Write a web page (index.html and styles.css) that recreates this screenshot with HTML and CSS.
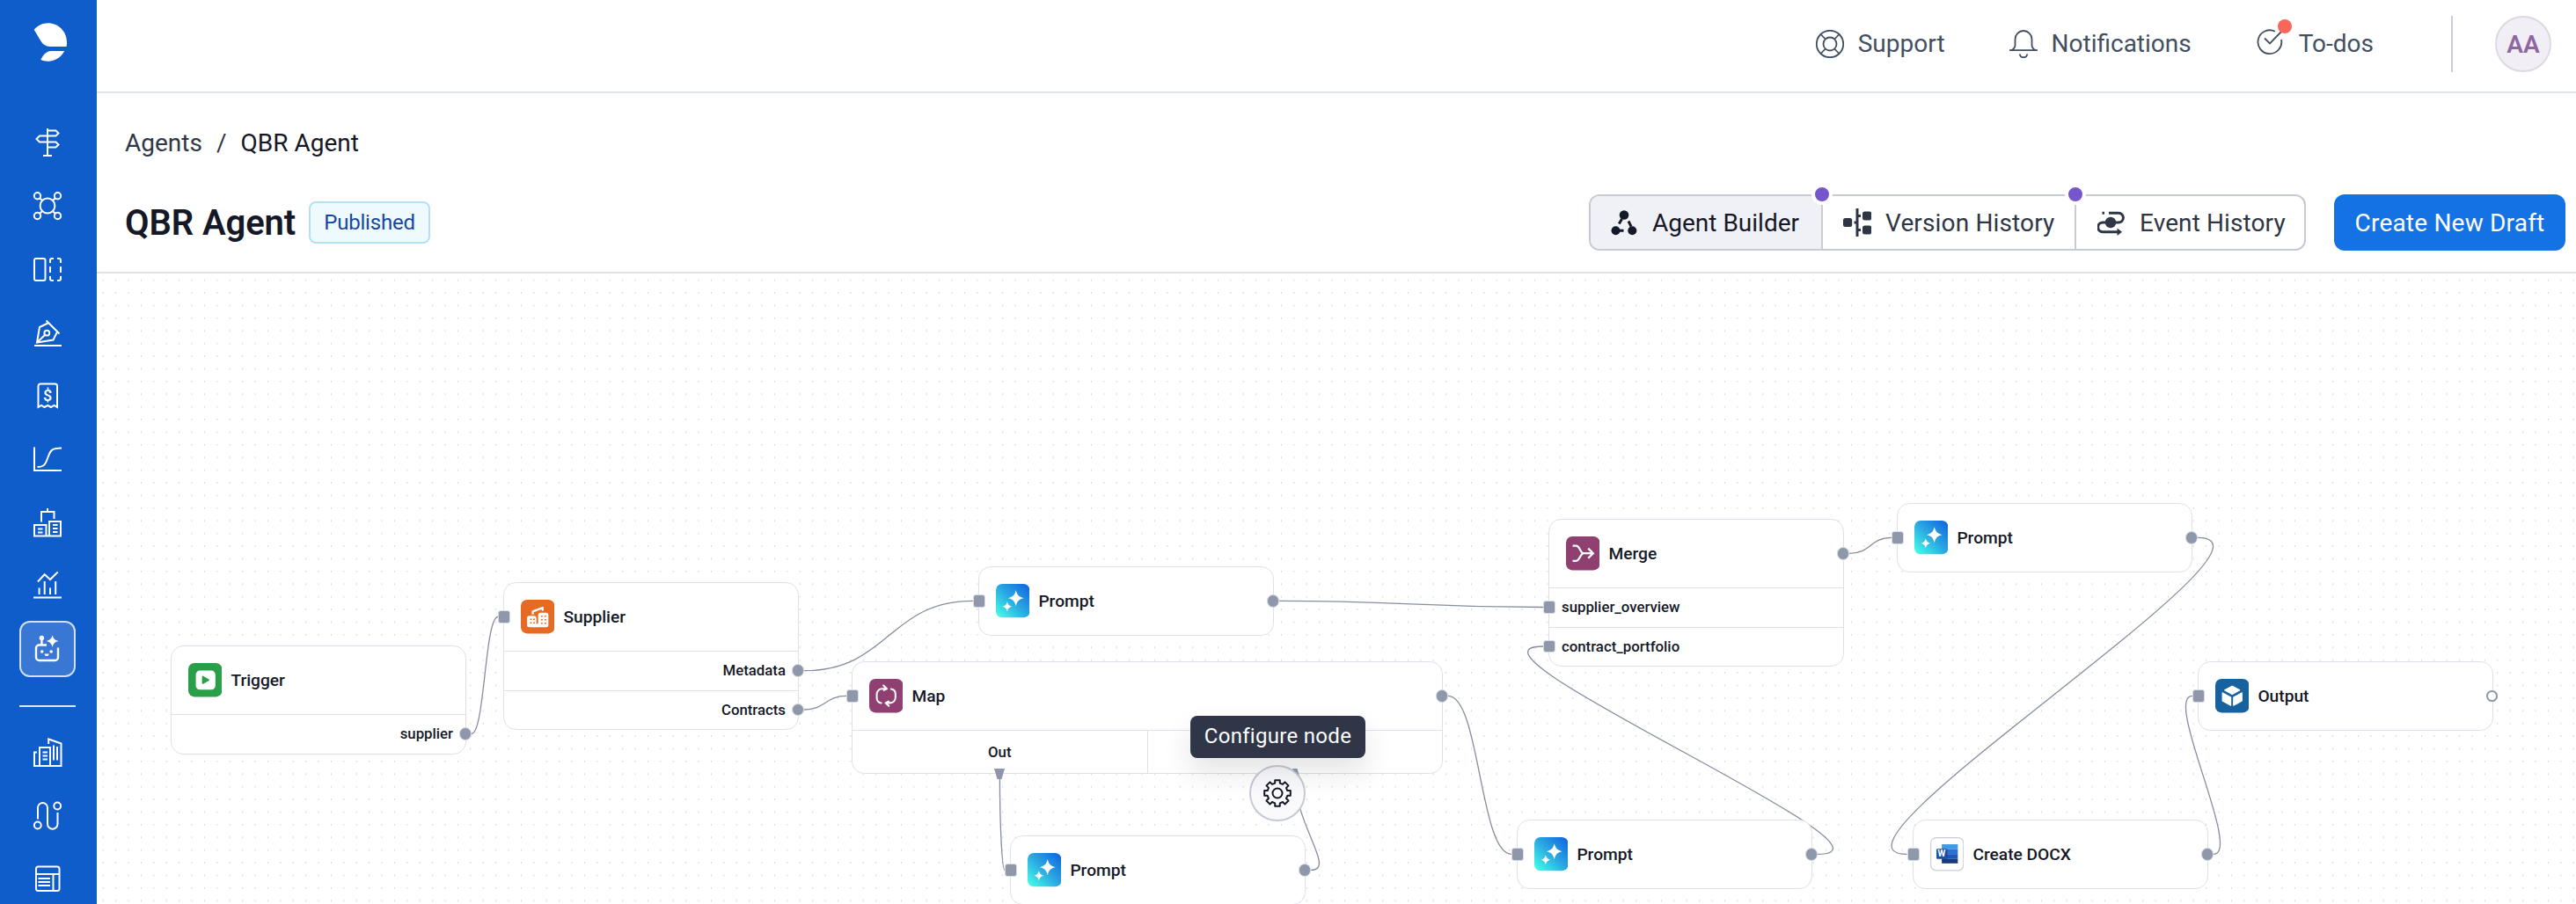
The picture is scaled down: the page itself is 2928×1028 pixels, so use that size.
FILE: index.html
```html
<!DOCTYPE html>
<html lang="en">
<head>
    <meta charset="UTF-8">
    <title>QBR Agent</title>
    <meta name="viewport" content="width=device-width, initial-scale=1.0">
    <link rel="stylesheet" href="styles.css">
</head>
<body>
    <!-- Shared icons -->
    <svg class="defs" width="0" height="0">
        <defs>
            <linearGradient id="promptFill" x1="0" y1="1" x2="1" y2="0">
                <stop offset="0.05" stop-color="#45fbe6"/>
                <stop offset="0.5" stop-color="#2aa9e2"/>
                <stop offset="0.95" stop-color="#1268e0"/>
            </linearGradient>
            <symbol id="sparkles" viewBox="0 0 38 38">
                <rect width="38" height="38" rx="7" fill="url(#promptFill)"/>
                <path fill="#fff" d="M22.5 7c1.3 5.5 3 7.600 8.700 9-5.700 1.400-7.400 3.500-8.700 9-1.300-5.500-3-7.600-8.700-9 5.700-1.400 7.400-3.500 8.700-9z"/>
                <path fill="#fff" d="M12.700 19.800c.8 3.500 2 4.800 5.700 5.700-3.700.9-4.900 2.200-5.700 5.700-.8-3.500-2-4.800-5.700-5.700 3.700-.9 4.900-2.200 5.700-5.700z"/>
            </symbol>
        </defs>
    </svg>

    <div class="app">
        <nav class="sidebar">
            <div class="logo">
                <svg width="38" height="44" viewBox="38 26 38 44" fill="#fff">
                    <path d="M38.700 33.700C43 29 48.500 26.300 54.500 26.300 66.500 26.300 76 36 76 48c0 2-.1 3.500-.4 4.900H57C52 52.800 48.500 50.500 46 46z"/>
                    <path d="M73.300 58H58c-6 .5-9 4.500-11.700 10C56 72 67 69 73.300 58z"/>
                </svg>
            </div>
            <a class="nav-item"><svg viewBox="0 0 32 32"><path d="M16 0v31M11 31h10M16 2.500h9.500l3 3-3 3H7L3.500 12 7 15.500h18.500l3 3-3 3H16"/></svg></a>
            <a class="nav-item"><svg viewBox="0 0 32 32"><circle cx="16" cy="16" r="8.400"/><circle cx="4.500" cy="4.700" r="3.700"/><circle cx="27.500" cy="4.700" r="3.700"/><circle cx="4.500" cy="27.500" r="3.700"/><circle cx="27.500" cy="27.500" r="3.700"/><path d="M7.200 7.400l3 2.700M24.800 7.400l-3 2.700M7.200 24.800l3-2.700M24.800 24.800l-3-2.700"/></svg></a>
            <a class="nav-item"><svg viewBox="0 0 32 32"><rect x="1" y="4" width="12.500" height="25" rx="2"/><path d="M19 9V6a2 2 0 0 1 2-2h2M27 4h2a2 2 0 0 1 2 2v3M19 13v7M31 13v7M19 24v3a2 2 0 0 0 2 2h2M27 29h2a2 2 0 0 0 2-2v-3"/></svg></a>
            <a class="nav-item"><svg viewBox="0 0 32 32"><path d="M1 31h31M14.500 2.500L29.500 17.500M16.500 5.500L7 10 4 27.500l18.500-3L27 15.500M4 27.500l9.200-8.800"/><circle cx="15.300" cy="16.700" r="2.900"/></svg></a>
            <a class="nav-item"><svg viewBox="0 0 32 32"><path d="M5.500 29V5a2.500 2.500 0 0 1 2.500-2.500h16.500A2.500 2.500 0 0 1 27 5v24l-3.500-2-3.500 2-3.700-2-3.800 2L9 27z"/><text x="16.200" y="22" class="dollar">$</text></svg></a>
            <a class="nav-item"><svg viewBox="0 0 32 32"><path d="M1 2.500V29h31M4.500 25c7 0 9-2 12-11S22 3.500 32 3.500"/></svg></a>
            <a class="nav-item"><svg viewBox="0 0 32 32"><path d="M16 0v4M9 15.500V4h14.500v8M1 19h13.500v12.500H1zM18 15h13v16.500H18zM14.500 31.500H18M5 23.500h5.500M5 27.500h5.500M22 19h5.500M22 23h5.500M22 27h5.500"/></svg></a>
            <a class="nav-item"><svg viewBox="0 0 32 32"><path d="M0 29.500h32M6.600 18.400V26M12.700 11v15M19 18.400V26M25.200 11v15M5 11.500l7.700-8.300L19 9l8.700-8.500"/></svg></a>
            <a class="nav-item active"><svg viewBox="0 0 32 32"><path class="line" d="M15 11.500H6.500A3.500 3.500 0 0 0 3 15v10.500A3.500 3.500 0 0 0 6.500 29h18a3.500 3.500 0 0 0 3.500-3.500V14.500M9.400 5v6"/><circle cx="9.400" cy="3.500" r="2.700" class="solid"/><circle cx="9.700" cy="19" r="1.800" class="solid"/><circle cx="20.200" cy="19" r="1.800" class="solid"/><path class="solid" d="M12.500 21.500h5.200c0 3.400-5.200 3.400-5.200 0z"/><path class="solid" d="M21.600.3c1.300 4.200 2.700 5.600 6.800 6.800-4.100 1.200-5.500 2.600-6.800 6.800-1.300-4.200-2.700-5.600-6.800-6.800 4.100-1.200 5.500-2.600 6.800-6.800z"/></svg></a>
            <div class="nav-divider"></div>
            <a class="nav-item"><svg viewBox="0 0 32 32"><path d="M4 15.500H1v15.500h30.500V5.500L17.200.5V6M7 31V10h12v21M23 7.500v17M27 9v15.500M10.500 15.500h5.500M10.500 19.500h5.500M10.500 23.500h5.500"/></svg></a>
            <a class="nav-item"><svg viewBox="0 0 32 32"><circle cx="4.800" cy="26.500" r="3.900"/><circle cx="27.200" cy="4.500" r="3.900"/><path d="M5 19.500V6.500a5.500 5.500 0 0 1 11 0v18.500a5.700 5.700 0 0 0 11.500 0V12"/></svg></a>
            <a class="nav-item"><svg viewBox="0 0 32 32"><rect x="3" y="1.500" width="26.500" height="27.500" rx="2.500"/><path d="M3 10h26.500M22.500 10v19M5.500 15h13.500M5.500 19h13.500M5.500 23h13.500"/></svg></a>
        </nav>

        <main class="main">
            <header class="topbar">
                <a class="top-link support">
                    <svg viewBox="0 0 32 32"><circle cx="16" cy="16" r="15.200"/><circle cx="16" cy="16" r="7.500"/><path d="M5.500 5l5.300 5.500M26.500 5l-5.300 5.500M5.500 27l5.300-5.500M26.500 27l-5.300-5.500"/></svg>
                    Support
                </a>
                <a class="top-link notifications">
                    <svg viewBox="0 0 32 32"><path d="M0 23.200h32M2.500 23c3-1.500 4-3 4-6v-6.500a9.500 9.500 0 0 1 19 0V17c0 3 1 4.500 4 6M11.800 27.500c.5 5 7.900 5 8.400 0"/></svg>
                    Notifications
                </a>
                <a class="top-link todos">
                    <svg viewBox="0 0 32 32"><path d="M21 3.800A13.400 13.400 0 1 0 28 13M9 11.500l6 6L29 3"/></svg>
                    <span class="alert-dot"></span>
                    To-dos
                </a>
                <div class="top-divider"></div>
                <div class="avatar">AA</div>
            </header>

            <section class="page-header">
                <div class="breadcrumb">
                    <span>Agents</span>
                    <span class="slash">/</span>
                    <span class="current">QBR Agent</span>
                </div>
                <div class="title-row">
                    <h1>QBR Agent</h1>
                    <span class="badge">Published</span>
                    <div class="tabs">
                        <button class="tab tab-builder active">
                            <svg viewBox="0 0 32 32"><circle cx="16" cy="7.500" r="5.300"/><circle cx="6.500" cy="25.200" r="5"/><circle cx="25.300" cy="25.200" r="5"/><path class="line" d="M13.500 12l-3.200 5.500M21 14.500l3 6M11 25.200h4.500"/></svg>
                            Agent Builder
                        </button>
                        <button class="tab tab-version">
                            <svg viewBox="0 0 32 32"><rect x="0" y="11" width="10.200" height="10" rx="2.500"/><rect x="22" y="3.500" width="10.200" height="10" rx="2.500"/><rect x="22" y="19.500" width="10.200" height="10" rx="2.500"/><path class="line" d="M16 0v32M12.500 16H16M16 8.500h4M16 24.500h4"/></svg>
                            Version History
                            <span class="new-dot"></span>
                        </button>
                        <button class="tab tab-event">
                            <svg viewBox="0 0 32 32"><circle cx="15" cy="16" r="6.200"/><path class="line" d="M5.500 5.200h2.500M13 5.200h11a5.400 5.400 0 0 1 0 10.800h-3M9 16H6a5.300 5.300 0 0 0 0 10.700h18"/><path d="M22.500 22.500l5.500 4.200-5.500 4.200z"/></svg>
                            Event History
                            <span class="new-dot"></span>
                        </button>
                    </div>
                    <button class="primary">Create New Draft</button>
                </div>
            </section>

            <!-- Flow canvas -->
            <section class="canvas">
                <svg class="edges" width="2818" height="717" viewBox="110 311 2818 717">
                    <pattern id="dots" x="110" y="311" width="14.4" height="14.4" patternUnits="userSpaceOnUse">
                        <circle cx="7.200" cy="7.600" r="0.650" fill="#b4b6bb"/>
                    </pattern>
                    <rect x="110" y="311" width="2818" height="717" fill="url(#dots)"/>
                    <path d="M536 834.500C551 834.500 551 701.500 566 701.500"/>
                    <path d="M914 762.700C1010 762.700 1010 683.400 1106 683.400"/>
                    <path d="M914 807C938 807 938 791.400 962 791.400"/>
                    <path d="M1454 683.400C1604 683.400 1604 690.500 1754 690.500"/>
                    <path d="M2102 629.400C2126 629.400 2126 611.400 2150 611.400"/>
                    <path d="M2498 611.400C2622 611.400 2043.600 971.400 2167.600 971.400"/>
                    <path d="M2516 971.400C2549.500 971.400 2458.500 791.400 2492 791.400"/>
                    <path d="M1646 791.400C1682 791.400 1682 971.400 1718 971.400"/>
                    <path d="M2066 971.400C2187 971.400 1633 735 1754 735"/>
                    <path d="M1136.400 884C1136.400 938 1139 989.400 1142 989.400"/>
                    <path d="M1490 989.400C1519 989.400 1472 938 1472 884"/>
                </svg>

                <div class="node trigger">
                    <div class="node-head">
                        <svg viewBox="0 0 38 38"><rect width="38" height="38" rx="7" fill="#2b9e49"/><rect x="8.500" y="8.500" width="22" height="21.500" rx="4.500" fill="#fff"/><path d="M15.500 15.300c0-.8.800-1 1.300-.7l6.400 3.700c.7.400.7 1.200 0 1.600l-6.400 3.600c-.6.300-1.300 0-1.300-.7z" fill="#2b9e49"/></svg>
                        Trigger
                    </div>
                    <div class="node-row out">supplier<i class="port port-out"></i></div>
                </div>

                <div class="node supplier">
                    <div class="node-head">
                        <i class="port port-in"></i>
                        <svg viewBox="0 0 38 38"><rect width="38" height="38" rx="7" fill="#e76a22"/><path d="M13.500 15.500v-2.300l11-4.200v2.500" fill="none" stroke="#fff" stroke-width="2.400" stroke-linecap="round" stroke-linejoin="round"/><rect x="7" y="18" width="10.500" height="13" rx="2.500" fill="#fff"/><rect x="19.500" y="14.500" width="11.500" height="16.500" rx="2.500" fill="#fff"/><path d="M15 27h6v4h-6z" fill="#fff"/><path d="M10.500 22h1.800M14 22h1.800M10.500 26h1.800M14 26h1.800M22.700 18.500h1.800M26.700 18.500h1.800M22.700 22.500h1.800M26.700 22.500h1.800M22.700 26.500h1.800M26.700 26.500h1.800" stroke="#e76a22" stroke-width="1.600"/></svg>
                        Supplier
                    </div>
                    <div class="node-row out">Metadata<i class="port port-out"></i></div>
                    <div class="node-row out">Contracts<i class="port port-out"></i></div>
                </div>

                <div class="node prompt-overview">
                    <div class="node-head"><i class="port port-in"></i><svg><use href="#sparkles"/></svg>Prompt<i class="port port-out"></i></div>
                </div>

                <div class="node map">
                    <div class="node-head">
                        <i class="port port-in"></i>
                        <svg viewBox="0 0 38 38"><rect width="38" height="38" rx="7" fill="#903f71"/><path d="M19.500 11.200h-5a6 6 0 0 0-6 6v4c0 3.200 2 5.400 5 5.900M16 7.500l3.800 3.700-3.300 1.500M18.500 27.100h5a6 6 0 0 0 6-6v-4c0-3.200-2-5.300-5-5.800M22 30.500l-3.600-3.400 3.300-1.800" fill="none" stroke="#fff" stroke-width="2" stroke-linecap="round" stroke-linejoin="round"/></svg>
                        Map
                        <i class="port port-out"></i>
                    </div>
                    <div class="node-split">
                        <div>Out<svg class="port-tri" viewBox="0 0 14 14"><path d="M1 1h12L9.500 13h-5z"/></svg></div>
                        <div><svg class="port-tri" viewBox="0 0 14 14"><path d="M4.500 1h5L13 13H1z"/></svg></div>
                    </div>
                </div>

                <div class="node prompt-inner">
                    <div class="node-head"><i class="port port-in"></i><svg><use href="#sparkles"/></svg>Prompt<i class="port port-out"></i></div>
                </div>

                <div class="node merge">
                    <div class="node-head">
                        <svg viewBox="0 0 38 38"><rect width="38" height="38" rx="7" fill="#903f71"/><path d="M7.500 10.500h4c4 0 4.500 8.500 8.500 8.500M7.500 27.500h4c4 0 4.500-8.500 8.500-8.500h10.500M25 13.500l5.500 5.500-5.500 5.500" fill="none" stroke="#fff" stroke-width="2.200"/></svg>
                        Merge
                        <i class="port port-out"></i>
                    </div>
                    <div class="node-row in"><i class="port port-in"></i>supplier_overview</div>
                    <div class="node-row in"><i class="port port-in"></i>contract_portfolio</div>
                </div>

                <div class="node prompt-report">
                    <div class="node-head"><i class="port port-in"></i><svg><use href="#sparkles"/></svg>Prompt<i class="port port-out"></i></div>
                </div>

                <div class="node prompt-contracts">
                    <div class="node-head"><i class="port port-in"></i><svg><use href="#sparkles"/></svg>Prompt<i class="port port-out"></i></div>
                </div>

                <div class="node docx">
                    <div class="node-head">
                        <i class="port port-in"></i>
                        <svg viewBox="0 0 38 38"><rect x=".6" y=".6" width="36.800" height="36.800" rx="6" fill="#fff" stroke="#c9ced8" stroke-width="1.200"/><rect x="13" y="8" width="18" height="5.500" fill="#3f9ae4"/><rect x="13" y="13.500" width="18" height="5.500" fill="#2a72cf"/><rect x="13" y="19" width="18" height="5.500" fill="#1d57b8"/><rect x="13" y="24.500" width="18" height="5" fill="#16397f"/><path d="M13 13.500h6.500v12.500H13z" fill="#153a86" opacity=".6"/><rect x="7" y="13" width="11.500" height="11.500" rx="1" fill="#1b4fae"/><text x="12.700" y="22" class="word">W</text></svg>
                        Create DOCX
                        <i class="port port-out"></i>
                    </div>
                </div>

                <div class="node output">
                    <div class="node-head">
                        <i class="port port-in"></i>
                        <svg viewBox="0 0 38 38"><rect width="38" height="38" rx="7" fill="#17629e"/><g fill="#fff" stroke="#fff" stroke-linejoin="round"><path d="M19 8l8.500 4.600L19 17.500l-8.500-4.900zM8 15.500l9.500 5.200v9.300L8 24.700zM30 15.500l-9.500 5.200v9.300l9.500-5.300z"/></g></svg>
                        Output
                        <i class="port port-out empty"></i>
                    </div>
                </div>

                <button class="configure">
                    <svg viewBox="0 0 32 32"><path d="M13.200 4.600V1.200h5.600v3.400l3.200 1.300 2.500-2.500 4 4-2.500 2.500 1.300 3.200h3.500v5.700h-3.500L26 22l2.500 2.500-4 4-2.500-2.500-3.200 1.400v3.400h-5.600v-3.400L10 26l-2.500 2.500-4-4L6 22l-1.300-3.200H1.200v-5.700h3.500L6 9.900 3.500 7.400l4-4L10 5.900z"/><circle cx="16" cy="16" r="5.500"/></svg>
                </button>
                <div class="tooltip">Configure node</div>
            </section>
        </main>
    </div>
</body>
</html>
```
FILE: styles.css
```css
* {
    box-sizing: border-box;
}

body {
    margin: 0;
    font-family: Roboto, "Liberation Sans", sans-serif;
    font-size: 28px;
    color: #151826;
    background-color: #fff;
}

button {
    font: inherit;
    color: inherit;
    padding: 0;
    border: none;
    background: none;
}

.defs {
    position: absolute;
}

.app {
    display: flex;
    height: 1028px;
    overflow: hidden;
}

/* Sidebar */
.sidebar {
    width: 110px;
    flex: none;
    display: flex;
    flex-direction: column;
    gap: 8px;
    padding-left: 22px;
    background-color: #0f5ccb;
}

.logo {
    flex: none;
    height: 122px;
    padding: 26px 0 0 16px;
}

.logo svg {
    display: block;
}

.nav-item {
    width: 64px;
    height: 64px;
    flex: none;
    display: flex;
    align-items: center;
    justify-content: center;
    border: 2px solid transparent;
    border-radius: 12px;
}

.nav-item.active {
    background-color: #3877d4;
    border-color: #d3e0f4;
}

.nav-item svg {
    width: 32px;
    height: 32px;
    overflow: visible;
    fill: none;
    stroke: #fff;
    stroke-width: 2;
}

.nav-item .line {
    stroke-width: 2.4;
}

.nav-item .solid {
    fill: #fff;
    stroke: none;
}

.nav-item .dollar {
    font-size: 18px;
    font-weight: 500;
    text-anchor: middle;
    fill: #fff;
    stroke: none;
}

.nav-divider {
    flex: none;
    width: 64px;
    height: 2px;
    margin: 24px 0 12px;
    background-color: #dbe6f7;
}

/* Top bar */
.main {
    flex: 1;
    min-width: 0;
    display: flex;
    flex-direction: column;
}

.topbar {
    height: 106px;
    flex: none;
    display: flex;
    align-items: center;
    justify-content: flex-end;
    padding: 0 28px 4px 0;
    border-bottom: 2px solid #dfe4e9;
    color: #434f60;
}

.top-link {
    position: relative;
    display: flex;
    align-items: center;
    gap: 16px;
    line-height: 32px;
    padding-bottom: 1px;
}

.top-link svg {
    width: 32px;
    height: 32px;
    fill: none;
    stroke: #434f60;
    stroke-width: 1.8;
}

.top-link.support {
    margin-right: 73px;
}

.top-link.notifications {
    margin-right: 74px;
}

.top-link.todos {
    margin-right: 88px;
}

.top-link.todos svg {
    margin-top: -4px;
}

.alert-dot {
    position: absolute;
    left: 24px;
    top: -12px;
    width: 16px;
    height: 16px;
    border-radius: 50%;
    background-color: #fb665b;
}

.top-divider {
    width: 2px;
    height: 64px;
    margin-right: 48px;
    background-color: #c9cdd6;
}

.avatar {
    width: 64px;
    height: 64px;
    display: flex;
    align-items: center;
    justify-content: center;
    border: 2px solid #dcd9e3;
    border-radius: 50%;
    background-color: #f1eef6;
    color: #8f66a1;
    font-weight: 600;
}

/* Page header */
.page-header {
    height: 205px;
    flex: none;
    display: flex;
    flex-direction: column;
    gap: 38px;
    padding: 37px 12px 0 32px;
    border-bottom: 2px solid #dfe4e9;
}

.breadcrumb {
    display: flex;
    gap: 16px;
    line-height: 40px;
    color: #2f3847;
}

.breadcrumb .current {
    color: #151826;
}

.title-row {
    display: flex;
    align-items: center;
    height: 64px;
}

h1 {
    margin: 0;
    font-size: 40px;
    font-weight: 600;
    letter-spacing: -0.1px;
}

.badge {
    margin-left: 15px;
    padding: 0 15px;
    height: 48px;
    line-height: 44px;
    font-size: 24px;
    letter-spacing: -0.2px;
    color: #14489e;
    background-color: #effaff;
    border: 2px solid #b2e1f4;
    border-radius: 8px;
}

.tabs {
    display: flex;
    height: 64px;
    margin-left: auto;
    border: 2px solid #c5cad4;
    border-radius: 12px;
}

.tab {
    position: relative;
    display: flex;
    align-items: center;
    gap: 16px;
    padding-left: 22px;
    color: #2e3646;
    fill: #2e3646;
    white-space: nowrap;
}

.tab + .tab {
    border-left: 2px solid #c9ccd3;
}

.tab svg {
    width: 32px;
    height: 32px;
}

.tab .line {
    fill: none;
    stroke: #2e3646;
    stroke-width: 3;
}

.tab.active {
    color: #151826;
    fill: #151826;
    background-color: #f0f1f6;
    border-radius: 10px 0 0 10px;
}

.tab.active .line {
    stroke: #151826;
}

.tab-builder {
    width: 262px;
}

.tab-version {
    width: 288px;
    padding-left: 23px;
    letter-spacing: 0.15px;
}

.tab-event {
    width: 261px;
    padding-left: 24px;
    letter-spacing: 0.1px;
}

.new-dot {
    position: absolute;
    left: -13px;
    top: -14px;
    width: 24px;
    height: 24px;
    border: 4px solid #fff;
    border-radius: 50%;
    background-color: #7656cd;
}

.primary {
    width: 263px;
    height: 64px;
    margin-left: 32px;
    border-radius: 12px;
    background-color: #1472e5;
    color: #fff;
    letter-spacing: 0.2px;
}

/* Canvas */
.canvas {
    position: relative;
    flex: 1;
    overflow: hidden;
}

.edges {
    position: absolute;
    left: 0;
    top: 0;
}

.edges path {
    fill: none;
    stroke: #858e9f;
    stroke-width: 1.3;
}

.node {
    position: absolute;
    width: 336px;
    border: 1.2px solid #dfe1ea;
    border-radius: 14.4px;
    background-color: #fff;
    font-weight: 500;
}

.node-head {
    position: relative;
    display: flex;
    align-items: center;
    gap: 10.4px;
    height: 77px;
    padding-left: 18.6px;
    font-size: 19.2px;
}

.node-head > svg {
    width: 38.4px;
    height: 38.4px;
}

.node-row {
    position: relative;
    display: flex;
    align-items: center;
    height: 44.6px;
    padding: 0 14px 1px;
    border-top: 1.2px solid #dfe1ea;
    font-size: 16.8px;
}

.node-row.out {
    justify-content: flex-end;
}

.node-split {
    display: flex;
    height: 49px;
    border-top: 1.2px solid #dfe1ea;
    font-size: 16.8px;
}

.node-split div {
    position: relative;
    flex: 1;
    display: flex;
    align-items: center;
    justify-content: center;
}

.node-split div + div {
    border-left: 1.2px solid #dfe1ea;
}

.port {
    position: absolute;
    top: 50%;
    width: 14.4px;
    height: 14.4px;
    margin-top: -7.2px;
    background-color: #8f98aa;
    border: 1px solid #d9dce4;
}

.port-in {
    left: -7.2px;
    border-radius: 3px;
}

.port-out {
    right: -7px;
    border-radius: 50%;
}

.node-row .port {
    margin-top: -7.7px;
}

.port.empty {
    width: 12.6px;
    height: 12.6px;
    margin-top: -6.3px;
    right: -6px;
    background-color: #fff;
    border: 2px solid #8f98aa;
}

.port-tri {
    position: absolute;
    left: 50%;
    bottom: -8px;
    width: 14px;
    height: 14px;
    margin-left: -7px;
    fill: #8f98aa;
}

.word {
    font-size: 10px;
    font-weight: 700;
    text-anchor: middle;
    fill: #fff;
}

/* Node positions on the canvas */
.trigger { left: 84px; top: 423px; }
.supplier { left: 462px; top: 351px; }
.prompt-overview { left: 1002px; top: 333px; }
.map { left: 858px; top: 441px; width: 672px; }
.prompt-inner { left: 1038px; top: 639px; }
.merge { left: 1650px; top: 279px; }
.prompt-report { left: 2046px; top: 261px; }
.prompt-contracts { left: 1614px; top: 621px; }
.docx { left: 2064px; top: 621px; }
.output { left: 2388px; top: 441px; }

.configure {
    position: absolute;
    left: 1310px;
    top: 559px;
    width: 64px;
    height: 64px;
    display: flex;
    align-items: center;
    justify-content: center;
    border: 2px solid #c5cad4;
    border-radius: 50%;
    background-color: #fafafd;
}

.configure svg {
    width: 32px;
    height: 32px;
    fill: none;
    stroke: #151826;
    stroke-width: 2;
    stroke-linejoin: round;
}

.tooltip {
    position: absolute;
    left: 1243px;
    top: 503px;
    width: 199px;
    height: 48px;
    line-height: 47px;
    text-align: center;
    font-size: 24px;
    letter-spacing: 0.3px;
    color: #fff;
    background-color: #2e3647;
    border-radius: 8px;
    box-shadow: 0 16px 32px rgba(30, 35, 50, 0.12);
}
```
